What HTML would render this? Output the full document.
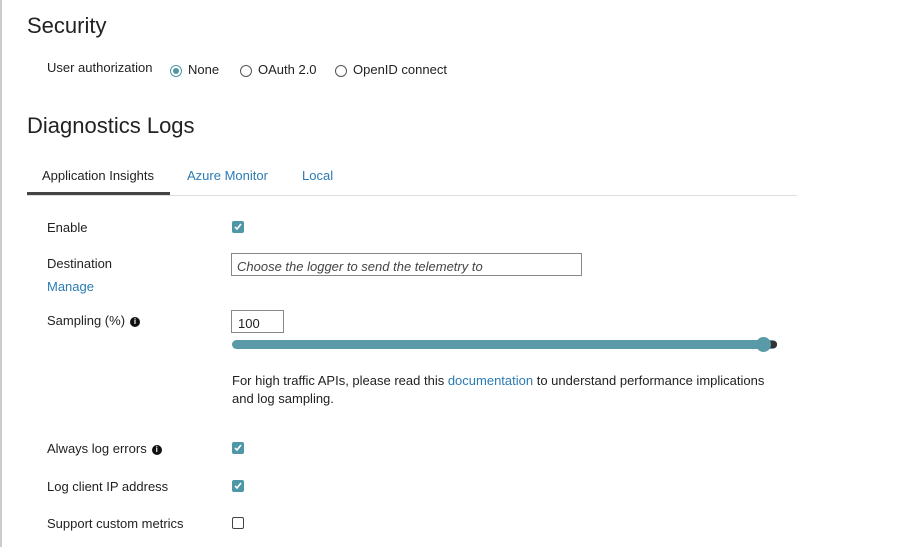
<!DOCTYPE html>
<html><head><meta charset="utf-8"><style>
body{margin:0;width:912px;height:547px;background:#fff;font-family:"Liberation Sans",sans-serif;color:#222;position:relative;overflow:hidden}
.a{position:absolute;white-space:nowrap}
.t{font-size:13px}
h{position:absolute;font-size:22px;color:#222}
.lnk{color:#2b7bb5}
.cb{position:absolute;width:12px;height:12px;border-radius:2px;background:#4e97a6}
.cb svg{position:absolute;left:1px;top:1px}
.cbo{position:absolute;width:10px;height:10px;border:1px solid #444;border-radius:2px;background:#fff}
.rd{position:absolute;width:10px;height:10px;border:1px solid #555;border-radius:50%}
.info{display:inline-block;width:10px;height:10px;border-radius:50%;background:#111;color:#fff;font-size:8px;font-weight:bold;text-align:center;line-height:10px;vertical-align:1px;margin-left:5px}
</style></head><body>
<div class="a" style="left:0;top:0;width:2px;height:547px;background:#ccc"></div>
<h style="left:27px;top:13px">Security</h>
<div class="a t" style="left:47px;top:60px">User authorization</div>
<div class="rd" style="left:170px;top:65px;border-color:#4e97a6"><div style="position:absolute;left:2px;top:2px;width:6px;height:6px;border-radius:50%;background:#4e97a6"></div></div>
<div class="a t" style="left:188px;top:62px">None</div>
<div class="rd" style="left:240px;top:65px"></div>
<div class="a t" style="left:258px;top:62px">OAuth 2.0</div>
<div class="rd" style="left:335px;top:65px"></div>
<div class="a t" style="left:353px;top:62px">OpenID connect</div>
<h style="left:27px;top:113px">Diagnostics Logs</h>
<div class="a t" style="left:42px;top:168px">Application Insights</div>
<div class="a t lnk" style="left:187px;top:168px">Azure Monitor</div>
<div class="a t lnk" style="left:302px;top:168px">Local</div>
<div class="a" style="left:27px;top:195px;width:770px;height:1px;background:#ddd"></div>
<div class="a" style="left:27px;top:192px;width:143px;height:3px;background:#444"></div>
<div class="a t" style="left:47px;top:220px">Enable</div>
<div class="cb" style="left:232px;top:221px"><svg width="10" height="10"><path d="M2 5l2 2 4-5" stroke="#fff" stroke-width="1.6" fill="none"/></svg></div>
<div class="a t" style="left:47px;top:256px">Destination</div>
<div class="a t lnk" style="left:47px;top:279px">Manage</div>
<div class="a t" style="left:231px;top:253px;width:351px;height:23px;border:1px solid #888;box-sizing:border-box"></div>
<div class="a t" style="left:237px;top:259px;font-style:italic;color:#444">Choose the logger to send the telemetry to</div>
<div class="a t" style="left:47px;top:313px">Sampling (%)<span class="info">i</span></div>
<div class="a" style="left:231px;top:310px;width:53px;height:23px;border:1px solid #888;box-sizing:border-box"></div>
<div class="a t" style="left:238px;top:316px">100</div>
<div class="a" style="left:232px;top:340px;width:545px;height:9px;border-radius:5px;background:#5a9aa8"></div>
<div class="a" style="left:768px;top:341px;width:9px;height:7px;border-radius:3px;background:#333"></div>
<div class="a" style="left:756px;top:337px;width:15px;height:15px;border-radius:50%;background:#5a9aa8"></div>
<div class="a t" style="left:232px;top:372px;line-height:18px">For high traffic APIs, please read this <span class="lnk">documentation</span> to understand performance implications<br>and log sampling.</div>
<div class="a t" style="left:47px;top:441px">Always log errors<span class="info">i</span></div>
<div class="cb" style="left:232px;top:442px"><svg width="10" height="10"><path d="M2 5l2 2 4-5" stroke="#fff" stroke-width="1.6" fill="none"/></svg></div>
<div class="a t" style="left:47px;top:479px">Log client IP address</div>
<div class="cb" style="left:232px;top:480px"><svg width="10" height="10"><path d="M2 5l2 2 4-5" stroke="#fff" stroke-width="1.6" fill="none"/></svg></div>
<div class="a t" style="left:47px;top:516px">Support custom metrics</div>
<div class="cbo" style="left:232px;top:517px"></div>
</body></html>
